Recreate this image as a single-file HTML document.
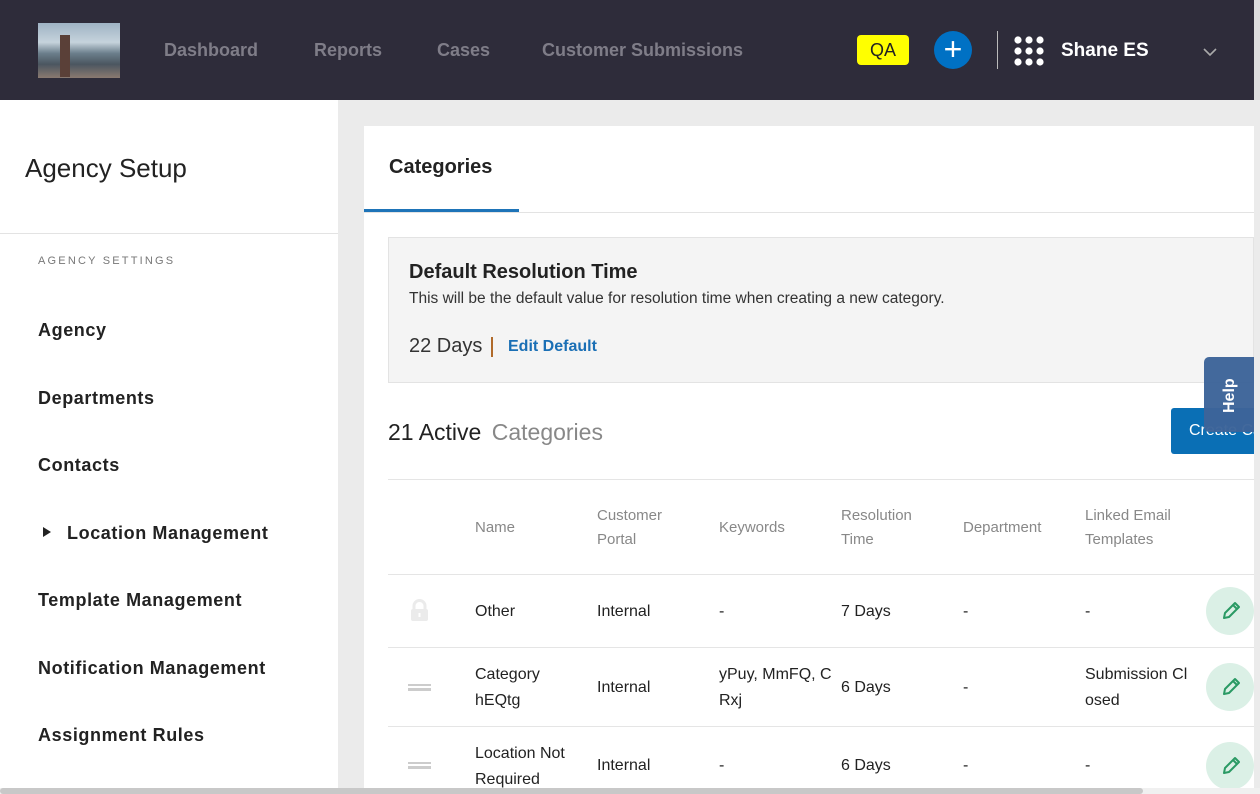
<!DOCTYPE html>
<html><head><style>
*{margin:0;padding:0;box-sizing:border-box}
body{width:1260px;height:794px;overflow:hidden;background:#ebebeb;font-family:"Liberation Sans",sans-serif;position:relative;color:#222}
.abs{position:absolute;white-space:nowrap}
.hdr{position:absolute;left:0;top:0;width:1254px;height:100px;background:#2e2c3a}
.nav{position:absolute;top:40px;font-size:18px;font-weight:bold;color:#7f7d88}
.side{position:absolute;left:0;top:100px;width:338px;height:694px;background:#fff}
.si{position:absolute;left:38px;font-size:18px;font-weight:bold;color:#222;letter-spacing:.6px}
.card{position:absolute;left:364px;top:126px;width:890px;height:668px;background:#fff}
.th{position:absolute;font-size:15px;color:#888;line-height:24px}
.td{position:absolute;font-size:16px;color:#222;line-height:26px}
.hl{position:absolute;left:388px;width:866px;height:1px;background:#e5e5e5}
.pen{position:absolute;left:1206px;width:48px;height:48px;border-radius:50%;background:#dbf0e6}
.drag{position:absolute;left:408px;width:23px;height:7px;border-top:2px solid #ccc;border-bottom:2px solid #ccc}
.drag:after{content:"";position:absolute;left:0;right:0;top:1.5px;height:1px;background:#ccc}
</style></head><body>
<div class="hdr"></div>
<div class="abs" style="left:1254px;top:0;width:6px;height:100px;background:#ddd"></div>
<div class="abs" style="left:38px;top:23px;width:82px;height:55px;background:linear-gradient(180deg,#9fb3c4 0%,#c6d3dc 35%,#6c7f8c 55%,#4b5660 75%,#8a7a70 100%)"></div>
<div class="abs" style="left:60px;top:35px;width:10px;height:42px;background:#5a4038"></div>
<div class="nav" style="left:164px">Dashboard</div>
<div class="nav" style="left:314px">Reports</div>
<div class="nav" style="left:437px">Cases</div>
<div class="nav" style="left:542px">Customer Submissions</div>
<div class="abs" style="left:857px;top:35px;width:52px;height:30px;background:#ffff00;border-radius:4px;color:#222;font-size:18px;text-align:center;line-height:30px">QA</div>
<div class="abs" style="left:934px;top:31px;width:38px;height:38px;background:#0071c4;border-radius:50%;color:#fff;font-size:32px;text-align:center;line-height:36px">+</div>
<div class="abs" style="left:997px;top:31px;width:1px;height:38px;background:#bbb"></div>
<svg class="abs" style="left:1014px;top:36px" width="32" height="30"><g fill="#fff">
<circle cx="4" cy="4" r="3.6"/><circle cx="15" cy="4" r="3.6"/><circle cx="26" cy="4" r="3.6"/>
<circle cx="4" cy="15" r="3.6"/><circle cx="15" cy="15" r="3.6"/><circle cx="26" cy="15" r="3.6"/>
<circle cx="4" cy="26" r="3.6"/><circle cx="15" cy="26" r="3.6"/><circle cx="26" cy="26" r="3.6"/></g></svg>
<div class="abs" style="left:1061px;top:40px;color:#fff;font-size:19px;font-weight:bold">Shane ES</div>
<svg class="abs" style="left:1203px;top:47px" width="14" height="10"><path d="M1 2l6 6 6-6" stroke="#aaa" stroke-width="1.6" fill="none"/></svg>

<div class="side"></div>
<div class="abs" style="left:25px;top:153px;font-size:26px;color:#222">Agency Setup</div>
<div class="abs" style="left:0;top:233px;width:338px;height:1px;background:#e3e3e3"></div>
<div class="abs" style="left:38px;top:255px;font-size:11px;letter-spacing:2.2px;color:#777">AGENCY SETTINGS</div>
<div class="si" style="top:320px">Agency</div>
<div class="si" style="top:388px">Departments</div>
<div class="si" style="top:455px">Contacts</div>
<div class="si" style="top:523px;left:67px"><span style="position:absolute;left:-24px;top:4px;border-left:8px solid #222;border-top:5px solid transparent;border-bottom:5px solid transparent"></span>Location Management</div>
<div class="si" style="top:590px">Template Management</div>
<div class="si" style="top:658px">Notification Management</div>
<div class="si" style="top:725px">Assignment Rules</div>

<div class="card"></div>
<div class="abs" style="left:389px;top:156px;font-size:20px;font-weight:bold;color:#222">Categories</div>
<div class="abs" style="left:364px;top:212px;width:890px;height:1px;background:#e3e3e3"></div>
<div class="abs" style="left:364px;top:209px;width:155px;height:3px;background:#1e74b8"></div>
<div class="abs" style="left:388px;top:237px;width:866px;height:146px;background:#f4f4f4;border:1px solid #e3e3e3"></div>
<div class="abs" style="left:409px;top:261px;font-size:20px;font-weight:bold;color:#222">Default Resolution Time</div>
<div class="abs" style="left:409px;top:290px;font-size:15.5px;color:#333">This will be the default value for resolution time when creating a new category.</div>
<div class="abs" style="left:409px;top:335px;font-size:20px;color:#333">22 Days</div>
<div class="abs" style="left:491px;top:337px;width:2px;height:20px;background:#b06a2a"></div>
<div class="abs" style="left:508px;top:338px;font-size:16px;font-weight:bold;color:#1a6fb5">Edit Default</div>
<div class="abs" style="left:388px;top:419px;font-size:23px;color:#222">21 Active <span style="color:#888;margin-left:4px">Categories</span></div>
<div class="abs" style="left:1171px;top:408px;width:83px;height:46px;background:#0a6fb5;border-radius:3px 0 0 3px;color:#fff;font-size:16px;line-height:46px;padding-left:18px;overflow:hidden">Create Ca</div>
<div class="abs" style="left:1204px;top:357px;width:50px;height:75px;background:#3d6499;border-radius:5px 0 0 5px;opacity:.97"></div>
<div class="abs" style="left:1221px;top:413px;color:#fff;font-size:16px;font-weight:bold;transform:rotate(-90deg);transform-origin:0 0">Help</div>

<div class="hl" style="top:479px"></div>
<div class="th" style="left:475px;top:516px">Name</div>
<div class="th" style="left:597px;top:504px">Customer<br>Portal</div>
<div class="th" style="left:719px;top:516px">Keywords</div>
<div class="th" style="left:841px;top:504px">Resolution<br>Time</div>
<div class="th" style="left:963px;top:516px">Department</div>
<div class="th" style="left:1085px;top:504px">Linked Email<br>Templates</div>
<div class="hl" style="top:574px"></div>

<svg class="abs" style="left:410px;top:599px" width="19" height="23"><path d="M4 10V7a5.5 5.5 0 0 1 11 0v3" stroke="#ebebeb" stroke-width="3" fill="none"/><rect x="1" y="10" width="17" height="12" rx="2" fill="#ebebeb"/><rect x="8.5" y="14" width="2" height="4" fill="#fff"/></svg>
<div class="td" style="left:475px;top:599px">Other</div>
<div class="td" style="left:597px;top:599px">Internal</div>
<div class="td" style="left:719px;top:599px">-</div>
<div class="td" style="left:841px;top:599px">7 Days</div>
<div class="td" style="left:963px;top:599px">-</div>
<div class="td" style="left:1085px;top:599px">-</div>
<div class="pen" style="top:587px"></div>
<div class="hl" style="top:647px"></div>

<div class="drag" style="top:684px"></div>
<div class="td" style="left:475px;top:662px">Category<br>hEQtg</div>
<div class="td" style="left:597px;top:675px">Internal</div>
<div class="td" style="left:719px;top:662px">yPuy, MmFQ, C<br>Rxj</div>
<div class="td" style="left:841px;top:675px">6 Days</div>
<div class="td" style="left:963px;top:675px">-</div>
<div class="td" style="left:1085px;top:662px">Submission Cl<br>osed</div>
<div class="pen" style="top:663px"></div>
<div class="hl" style="top:726px"></div>

<div class="drag" style="top:762px"></div>
<div class="td" style="left:475px;top:741px">Location Not<br>Required</div>
<div class="td" style="left:597px;top:753px">Internal</div>
<div class="td" style="left:719px;top:753px">-</div>
<div class="td" style="left:841px;top:753px">6 Days</div>
<div class="td" style="left:963px;top:753px">-</div>
<div class="td" style="left:1085px;top:753px">-</div>
<div class="pen" style="top:742px"></div>

<svg class="abs" style="left:1220px;top:600px" width="22" height="22"><path d="M4 18l1-5L15 3l4 4L9 17z M13 5l4 4" stroke="#2a9a64" stroke-width="2" fill="none" stroke-linejoin="round"/></svg>
<svg class="abs" style="left:1220px;top:676px" width="22" height="22"><path d="M4 18l1-5L15 3l4 4L9 17z M13 5l4 4" stroke="#2a9a64" stroke-width="2" fill="none" stroke-linejoin="round"/></svg>
<svg class="abs" style="left:1220px;top:755px" width="22" height="22"><path d="M4 18l1-5L15 3l4 4L9 17z M13 5l4 4" stroke="#2a9a64" stroke-width="2" fill="none" stroke-linejoin="round"/></svg>

<div class="abs" style="left:0;top:788px;width:1260px;height:6px;background:#f0f0f0"></div>
<div class="abs" style="left:0;top:788px;width:1143px;height:6px;background:#c8c8c8;border-radius:3px"></div>
</body></html>
